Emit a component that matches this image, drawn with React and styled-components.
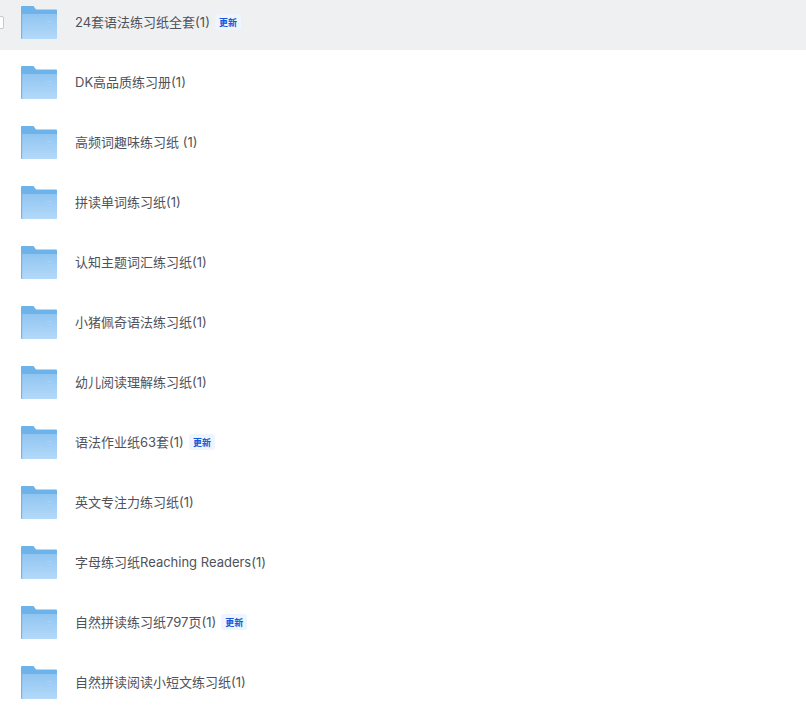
import React from 'react'
import styled, { createGlobalStyle } from 'styled-components'

const rows = [
  { name: '24套语法练习纸全套(1)', isNew: true, active: true },
  { name: 'DK高品质练习册(1)' },
  { name: '高频词趣味练习纸 (1)' },
  { name: '拼读单词练习纸(1)' },
  { name: '认知主题词汇练习纸(1)' },
  { name: '小猪佩奇语法练习纸(1)' },
  { name: '幼儿阅读理解练习纸(1)' },
  { name: '语法作业纸63套(1)', isNew: true },
  { name: '英文专注力练习纸(1)' },
  { name: '字母练习纸Reaching Readers(1)' },
  { name: '自然拼读练习纸797页(1)', isNew: true },
  { name: '自然拼读阅读小短文练习纸(1)' },
]

function FolderIcon({ id }) {
  return (
    <FolderSvg viewBox="0 0 36 33" aria-hidden="true">
      <defs>
        <linearGradient id={id} x1="0" y1="0" x2="0" y2="1">
          <stop offset="0" stopColor="#90c5f1" />
          <stop offset="1" stopColor="#b4d9f9" />
        </linearGradient>
      </defs>
      <path d="M0 1a1 1 0 0 1 1-1h11.5l2.5 3.5h20a1 1 0 0 1 1 1V10H0z" fill="#6db2e9" />
      <path d="M0 8h35a1 1 0 0 1 1 1V32a1 1 0 0 1-1 1H1a1 1 0 0 1-1-1z" fill={`url(#${id})`} />
      <path d="M0 8h1.2v25H1a1 1 0 0 1-1-1z" fill="#74b4e8" />
      <path d="M26 15h5v1h-5zM28 18h3v1h-3z" fill="#a9d2f6" />
    </FolderSvg>
  )
}

export default function App() {
  return (
    <>
      <GlobalStyle />
      <Page>
        <List>
          {rows.map((row, i) => (
            <Row key={row.name} $active={row.active}>
              {row.active && <Checkbox />}
              <FolderIcon id={`folder-${i}`} />
              <Name>{row.name}</Name>
              {row.isNew && <Badge>更新</Badge>}
            </Row>
          ))}
        </List>
      </Page>
    </>
  )
}

const GlobalStyle = createGlobalStyle`
  html, body {
    margin: 0;
    padding: 0;
    background: #fff;
  }
`

const Page = styled.div`
  width: 806px;
  height: 711px;
  overflow: hidden;
  font-family: Inter, "Noto Sans CJK SC", sans-serif;
`

const List = styled.div`
  display: flex;
  flex-direction: column;
  margin-top: -10px;
`

const Row = styled.div`
  position: relative;
  height: 60px;
  box-sizing: border-box;
  flex-shrink: 0;
  padding: 4px 0 0 21px;
  display: flex;
  align-items: center;
  background: ${p => (p.$active ? '#eff0f2' : '#fff')};
`

const Checkbox = styled.span`
  position: absolute;
  left: -11px;
  top: 26px;
  width: 13px;
  height: 11px;
  background: #fff;
  border: 1px solid #c6c9cf;
  border-radius: 2px;
`

const FolderSvg = styled.svg`
  width: 36px;
  height: 33px;
  flex-shrink: 0;
`

const Name = styled.span`
  margin-left: 18px;
  font-size: 13px;
  line-height: 18px;
  color: #4f525a;
`

const Badge = styled.span`
  margin-left: 5px;
  height: 16px;
  padding: 0 4px;
  display: inline-flex;
  align-items: center;
  font-size: 9px;
  font-weight: 700;
  color: #1a56d8;
  background: #eef5fe;
  border-radius: 3px;
`
